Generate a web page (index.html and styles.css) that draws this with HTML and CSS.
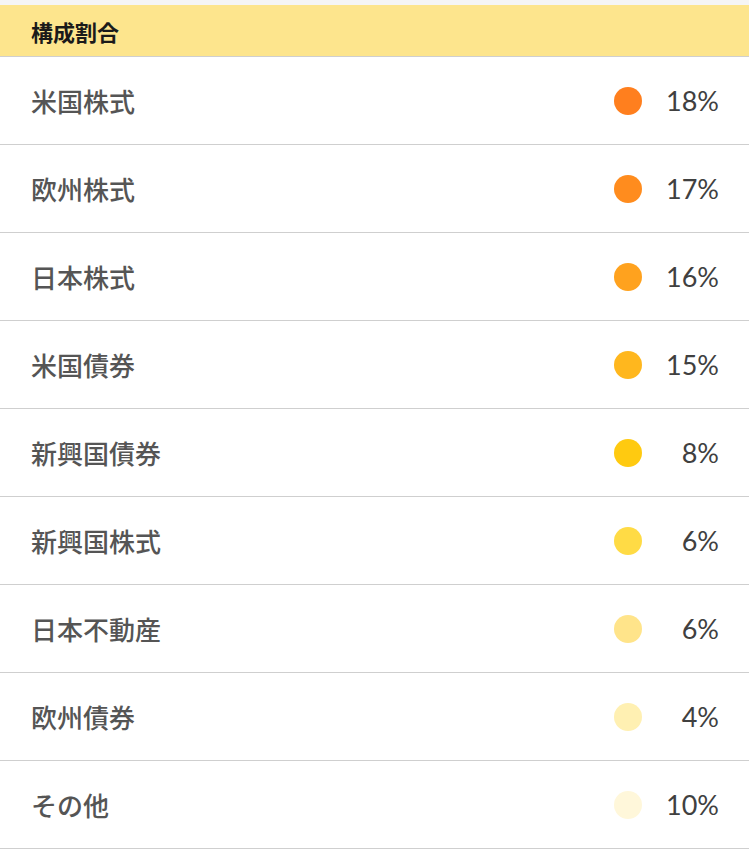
FILE: index.html
```html
<!DOCTYPE html>
<html>
<head>
    <title>構成割合</title>
    <link rel="stylesheet" href="styles.css">
</head>
<body>
    <div class="top-strip"></div>
    <div class="section-head">構成割合</div>
    <ul class="ratio-list">
        <li class="ratio-row"><span class="name">米国株式</span><span class="dot c1"></span><span class="pct">18%</span></li>
        <li class="ratio-row"><span class="name">欧州株式</span><span class="dot c2"></span><span class="pct">17%</span></li>
        <li class="ratio-row"><span class="name">日本株式</span><span class="dot c3"></span><span class="pct">16%</span></li>
        <li class="ratio-row"><span class="name">米国債券</span><span class="dot c4"></span><span class="pct">15%</span></li>
        <li class="ratio-row"><span class="name">新興国債券</span><span class="dot c5"></span><span class="pct">8%</span></li>
        <li class="ratio-row"><span class="name">新興国株式</span><span class="dot c6"></span><span class="pct">6%</span></li>
        <li class="ratio-row"><span class="name">日本不動産</span><span class="dot c7"></span><span class="pct">6%</span></li>
        <li class="ratio-row"><span class="name">欧州債券</span><span class="dot c8"></span><span class="pct">4%</span></li>
        <li class="ratio-row"><span class="name">その他</span><span class="dot c9"></span><span class="pct">10%</span></li>
    </ul>
</body>
</html>
```

FILE: styles.css
```css
body {
    margin: 0;
    background: #fff;
    font-family: "Noto Sans CJK JP", "Noto Sans", sans-serif;
}
.top-strip {
    height: 5px;
    background: #f5f5f5;
}
.section-head {
    height: 51px;
    display: flex;
    align-items: center;
    padding-left: 31px;
    background: #fde58d;
    border-bottom: 1px solid #cfcfcf;
    font-size: 22px;
    font-weight: bold;
    color: #1a1a1a;
}
.ratio-list {
    list-style: none;
    margin: 0;
    padding: 0;
}
.ratio-row {
    height: 87px;
    display: flex;
    align-items: center;
    padding: 0 30px 0 31px;
    border-bottom: 1px solid #cfcfcf;
}
.name {
    flex: 1;
    font-size: 26px;
    font-weight: 500;
    color: #555;
}
.dot {
    width: 28px;
    height: 28px;
    margin-right: 13px;
    border-radius: 50%;
}
.pct {
    width: 64px;
    text-align: right;
    font-family: Lato, "Noto Sans", sans-serif;
    font-size: 27px;
    color: #404040;
}
.c1 { background: #ff7f1e; }
.c2 { background: #ff8c1e; }
.c3 { background: #ffa21e; }
.c4 { background: #ffb71e; }
.c5 { background: #ffca10; }
.c6 { background: #ffdb45; }
.c7 { background: #ffe48a; }
.c8 { background: #fff0b2; }
.c9 { background: #fff7da; }
```
